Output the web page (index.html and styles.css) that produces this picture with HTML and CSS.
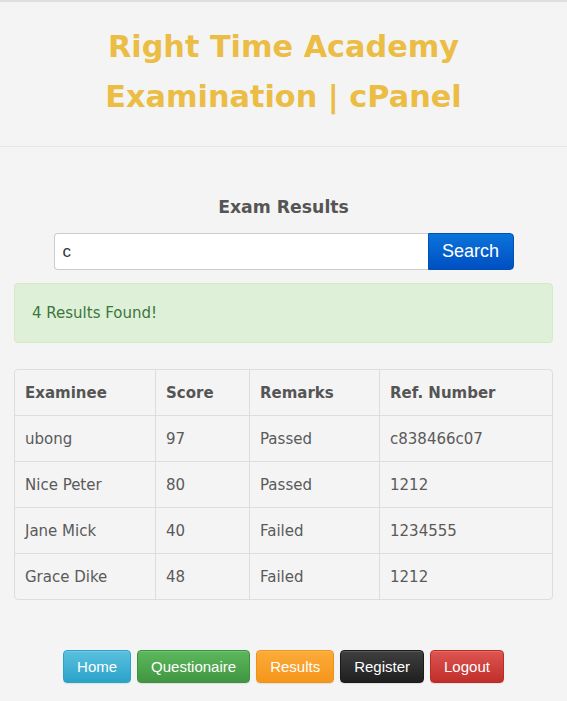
FILE: index.html
```html
<!DOCTYPE html>
<html lang="en">
<head>
<meta charset="utf-8">
<title>Right Time Academy Examination | cPanel</title>
<link rel="stylesheet" href="styles.css">
</head>
<body>
<header class="masthead">
  <h1 class="brand">Right Time Academy<br>Examination | cPanel</h1>
</header>
<main class="content">
  <h2 class="section-title">Exam Results</h2>
  <form class="search">
    <input class="search-input" type="text" value="c">
    <button class="search-btn" type="button">Search</button>
  </form>
  <div class="alert">4 Results Found!</div>
  <table class="results">
    <thead>
      <tr><th class="c1">Examinee</th><th class="c2">Score</th><th class="c3">Remarks</th><th>Ref. Number</th></tr>
    </thead>
    <tbody>
      <tr><td>ubong</td><td>97</td><td>Passed</td><td>c838466c07</td></tr>
      <tr><td>Nice Peter</td><td>80</td><td>Passed</td><td>1212</td></tr>
      <tr><td>Jane Mick</td><td>40</td><td>Failed</td><td>1234555</td></tr>
      <tr><td>Grace Dike</td><td>48</td><td>Failed</td><td>1212</td></tr>
    </tbody>
  </table>
  <nav class="actions">
    <a class="btn btn-info" href="#">Home</a>
    <a class="btn btn-success" href="#">Questionaire</a>
    <a class="btn btn-warning" href="#">Results</a>
    <a class="btn btn-dark" href="#">Register</a>
    <a class="btn btn-danger" href="#">Logout</a>
  </nav>
</main>
</body>
</html>
```
FILE: styles.css
```css
* { box-sizing: border-box; }
html, body { margin: 0; padding: 0; background: #f4f4f4; }
body {
  font-family: "DejaVu Sans", Verdana, sans-serif;
  font-size: 15px;
  color: #555;
  border-top: 2px solid #dedede;
}
.masthead {
  padding: 20px 0 24px;
  border-bottom: 1px solid #e6e6e6;
}
.brand {
  margin: 0;
  text-align: center;
  font-size: 30.3px;
  line-height: 50px;
  font-weight: bold;
  color: #ebbd45;
}
.content {
  padding: 0 14px 18px;
}
.section-title {
  margin: 49px 0 0;
  text-align: center;
  font-size: 17.3px;
  line-height: 22px;
  font-weight: bold;
  color: #555;
}
.search {
  display: flex;
  justify-content: center;
  margin: 15px 0 13px;
}
.search-input {
  width: 374px;
  height: 37px;
  border: 1px solid #ccc;
  border-right: none;
  border-radius: 4px 0 0 4px;
  padding: 0 8px;
  font-family: "Liberation Sans", Arial, sans-serif;
  font-size: 17px;
  color: #333;
  background: #fff;
  outline: none;
}
.search-btn {
  width: 86px;
  height: 37px;
  border: 1px solid #0050b8;
  border-radius: 0 4px 4px 0;
  background: linear-gradient(#0a74da, #004fc2);
  color: #fff;
  font-family: "Liberation Sans", Arial, sans-serif;
  font-size: 18px;
  padding: 0;
}
.alert {
  height: 60px;
  display: flex;
  align-items: center;
  padding: 0 17px;
  background: #dff0d8;
  border: 1px solid #d6e9c6;
  border-radius: 4px;
  color: #3c763d;
}
.results {
  width: 100%;
  margin-top: 26px;
  border-collapse: separate;
  border-spacing: 0;
  border: 1px solid #dddddd;
  border-radius: 4px;
}
.results th, .results td {
  height: 46px;
  padding: 0 10px;
  text-align: left;
  vertical-align: middle;
  border-left: 1px solid #dddddd;
  border-top: 1px solid #dddddd;
}
.results th:first-child, .results td:first-child { border-left: none; }
.results thead th { border-top: none; height: 45px; font-weight: bold; color: #555; }
.results td { color: #5a5a5a; }
.results .c1 { width: 140px; }
.results .c2 { width: 94px; }
.results .c3 { width: 130px; }
.actions {
  display: flex;
  justify-content: center;
  gap: 6px;
  margin-top: 50px;
}
.btn {
  display: inline-flex;
  align-items: center;
  justify-content: center;
  height: 33px;
  padding: 0 13px;
  border-radius: 4px;
  border: 1px solid transparent;
  font-family: "Liberation Sans", Arial, sans-serif;
  font-size: 15px;
  color: #fff;
  text-decoration: none;
  box-shadow: inset 0 1px 0 rgba(255,255,255,.15), 0 1px 1px rgba(0,0,0,.08);
}
.btn-info { background: linear-gradient(#5bc0de, #2aa3c9); border-color: #28a4c9; }
.btn-success { background: linear-gradient(#5cb85c, #419641); border-color: #3e8f3e; }
.btn-warning { background: linear-gradient(#fbab3a, #f6961b); border-color: #ef9216; }
.btn-dark { background: linear-gradient(#3f3f3f, #1f1f1f); border-color: #1a1a1a; }
.btn-danger { background: linear-gradient(#dd5551, #c12e2a); border-color: #b92c28; }
```
